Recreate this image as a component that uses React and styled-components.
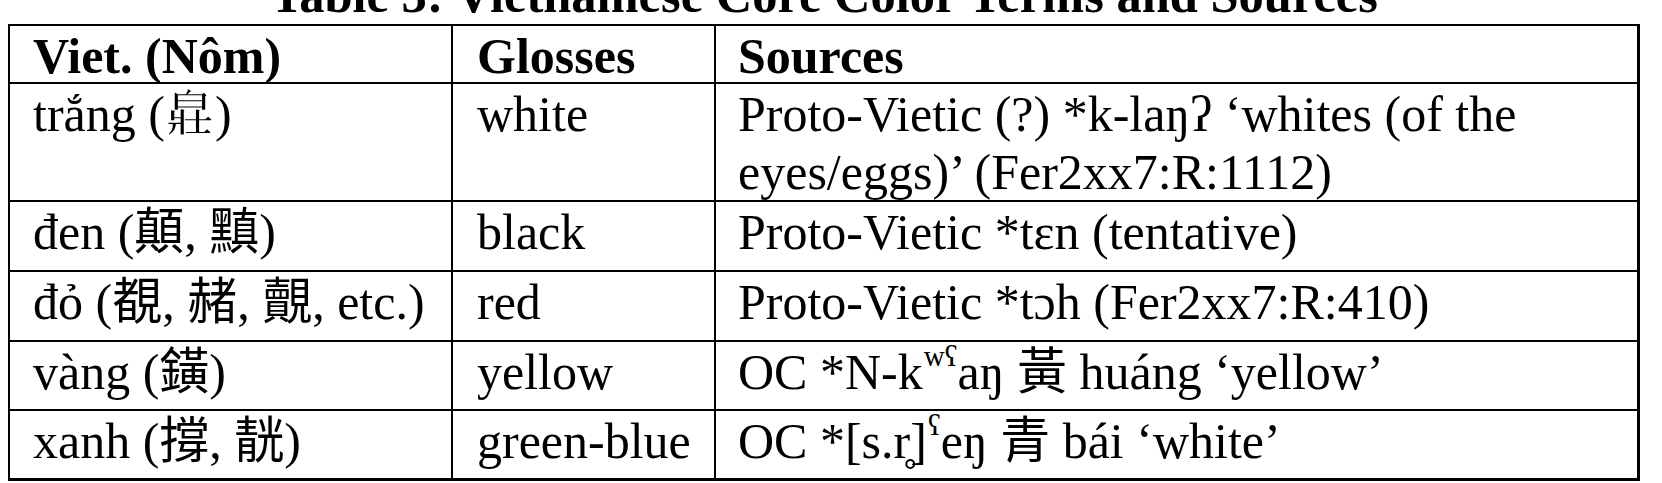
import React from "react";
import styled, { createGlobalStyle } from "styled-components";

const Global = createGlobalStyle`
  html, body { margin: 0; padding: 0; background: #fff; }
`;

const Page = styled.div`
  width: 1662px;
  height: 483px;
  overflow: hidden;
  display: flex;
  flex-direction: column;
  padding-left: 8px;
  box-sizing: border-box;
  font-family: "Liberation Serif", "Times New Roman", "Noto Sans CJK TC", "Noto Sans CJK SC", serif;
  font-size: 50px;
  line-height: 58px;
  color: #000;
`;

const Caption = styled.div`
  width: 1632px;
  flex: none;
  margin-top: -34px;
  text-align: center;
  font-weight: bold;
  font-size: 50.5px;
  white-space: nowrap;
`;

const Grid = styled.div`
  width: 1632px;
  flex: none;
  box-sizing: border-box;
  display: grid;
  grid-template-columns: 441px 261px 921px;
  column-gap: 2px;
  row-gap: 2px;
  background: #000;
  padding: 2px 3px 3px 2px;
`;

const Cell = styled.div`
  background: #fff;
  height: ${(p) => p.$h}px;
  padding-left: ${(p) => p.$pl}px;
  padding-top: 1px;
  padding-right: 10px;
  font-weight: ${(p) => (p.$head ? "bold" : "normal")};
  box-sizing: border-box;
`;

const Sup = styled.span`
  font-size: 0.58em;
  position: relative;
  top: -0.8em;
  line-height: 0;
  margin-left: 1px;
`;

const rows = [
  { h: 56, head: true, cells: ["Viet. (Nôm)", "Glosses", "Sources"] },
  {
    h: 116,
    cells: [
      "trắng (𤽸)",
      "white",
      "Proto-Vietic (?) *k-laŋʔ ‘whites (of the eyes/eggs)’ (Fer2xx7:R:1112)",
    ],
  },
  { h: 68, cells: ["đen (顛, 黰)", "black", "Proto-Vietic *tɛn (tentative)"] },
  {
    h: 68,
    cells: ["đỏ (覩, 赭, 覿, etc.)", "red", "Proto-Vietic *tɔh (Fer2xx7:R:410)"],
  },
  {
    h: 67,
    cells: [
      "vàng (鐄)",
      "yellow",
      <>
        OC *N-k<Sup>wʕ</Sup>aŋ 黃 huáng ‘yellow’
      </>,
    ],
  },
  {
    h: 67,
    cells: [
      "xanh (撐, 靗)",
      "green-blue",
      <>
        OC *[s.r̥]<Sup>ʕ</Sup>eŋ 青 bái ‘white’
      </>,
    ],
  },
];

const pads = [23, 24, 22];

export default function App() {
  return (
    <>
      <Global />
      <Page>
        <Caption>Table 3: Vietnamese Core Color Terms and Sources</Caption>
        <Grid>
          {rows.map((r, i) =>
            r.cells.map((c, j) => (
              <Cell key={`${i}-${j}`} $h={r.h} $head={r.head} $pl={pads[j]}>
                {c}
              </Cell>
            ))
          )}
        </Grid>
      </Page>
    </>
  );
}
